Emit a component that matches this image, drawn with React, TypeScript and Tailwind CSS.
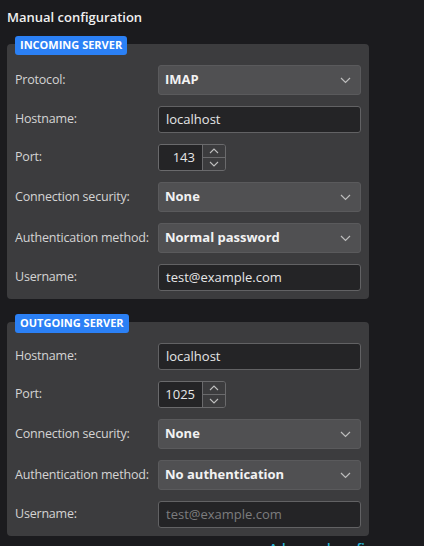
import React from "react";

const font = { fontFamily: '"Open Sans", "Noto Sans", sans-serif' };

function Chevron() {
  return (
    <svg width="11" height="7" viewBox="0 0 11 7" className="shrink-0">
      <path d="M1 1 L5.5 5.5 L10 1" fill="none" stroke="#bdbdbd" strokeWidth="1.2" />
    </svg>
  );
}

function Select({ value }: { value: string }) {
  return (
    <div className="flex h-[30px] items-center justify-between rounded-[3px] border border-[#5a5a5c] bg-[#505052] pl-[6px] pr-[9px]">
      <span className="whitespace-nowrap text-[13px] font-bold text-[#f2f2f2]">{value}</span>
      <Chevron />
    </div>
  );
}

function Input({ value, disabled }: { value: string; disabled?: boolean }) {
  return (
    <div className="flex h-[27px] items-center rounded-[3px] border border-[#626264] bg-[#242426] px-[7px]">
      <span className={"whitespace-nowrap text-[13px] " + (disabled ? "text-[#7c7c7e]" : "text-[#e6e6e6]")}>{value}</span>
    </div>
  );
}

function Spin({ value }: { value: string }) {
  return (
    <div className="flex h-[27px] w-[68px] overflow-hidden rounded-[3px] border border-[#6a6a6c]">
      <div className="flex w-[43px] items-center justify-end bg-[#242426] pr-[7px]">
        <span className="text-[13px] text-[#e6e6e6]">{value}</span>
      </div>
      <div className="flex flex-1 flex-col border-l border-[#6a6a6c] bg-[#3c3c3e]">
        <div className="flex flex-1 items-center justify-center border-b border-[#6a6a6c]">
          <svg width="10" height="6" viewBox="0 0 10 6">
            <path d="M1 5 L5 1 L9 5" fill="none" stroke="#bdbdbd" strokeWidth="1.1" />
          </svg>
        </div>
        <div className="flex flex-1 items-center justify-center">
          <svg width="10" height="6" viewBox="0 0 10 6">
            <path d="M1 1 L5 5 L9 1" fill="none" stroke="#bdbdbd" strokeWidth="1.1" />
          </svg>
        </div>
      </div>
    </div>
  );
}

function Row({ label, children }: { label: string; children: React.ReactNode }) {
  return (
    <div className="flex items-center">
      <div className="w-[143px] shrink-0 whitespace-nowrap text-[12.5px] tracking-[-0.2px] text-[#d4d4d4]">{label}</div>
      <div className="min-w-0 flex-1">{children}</div>
    </div>
  );
}

function Panel({ title, children }: { title: string; children: React.ReactNode }) {
  return (
    <div className="relative rounded-[4px] bg-[#3c3c3e] px-[8px] pb-[8px] pt-[21px]">
      <div className="absolute left-[8px] top-[-8px] flex h-[19px] items-center rounded-[3px] bg-[#2b80f5] px-[5px] text-[11px] font-bold text-white">
        {title}
      </div>
      <div className="flex flex-col gap-[11px]">{children}</div>
    </div>
  );
}

export default function App() {
  return (
    <div className="h-[546px] w-[424px] overflow-hidden bg-[#1b1b1e]" style={font}>
      <div className="w-[369px] pl-[7px] pt-[7px]">
        <div className="h-[20px] text-[13px] font-semibold leading-[20px] text-[#f0f0f0]">Manual configuration</div>
        <div className="mt-[17px]">
          <Panel title="INCOMING SERVER">
            <Row label="Protocol:"><Select value="IMAP" /></Row>
            <Row label="Hostname:"><Input value="localhost" /></Row>
            <Row label="Port:"><Spin value="143" /></Row>
            <Row label="Connection security:"><Select value="None" /></Row>
            <Row label="Authentication method:"><Select value="Normal password" /></Row>
            <Row label="Username:"><Input value="test@example.com" /></Row>
          </Panel>
        </div>
        <div className="mt-[23px]">
          <Panel title="OUTGOING SERVER">
            <Row label="Hostname:"><Input value="localhost" /></Row>
            <Row label="Port:"><Spin value="1025" /></Row>
            <Row label="Connection security:"><Select value="None" /></Row>
            <Row label="Authentication method:"><Select value="No authentication" /></Row>
            <Row label="Username:"><Input value="test@example.com" disabled /></Row>
          </Panel>
        </div>
        <div className="mt-[2px] whitespace-nowrap pl-[262px] text-[13px] font-semibold leading-[20px] text-[#27b3d4]">Advanced config</div>
      </div>
    </div>
  );
}
